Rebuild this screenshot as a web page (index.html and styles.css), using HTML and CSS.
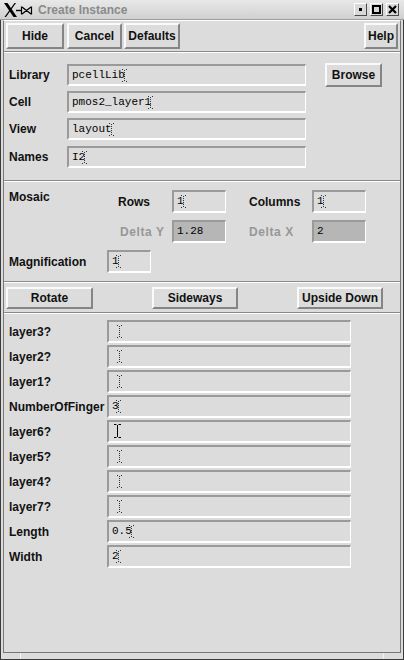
FILE: index.html
```html
<!DOCTYPE html>
<html>
<head>
<meta charset="utf-8">
<title>Create Instance</title>
<link rel="stylesheet" href="styles.css">
</head>
<body>
<div class="window">
  <div class="titlebar">
    <svg class="wm-logo" width="34" height="20" viewBox="0 0 34 20">
      <polygon points="3,3 6.5,3 16,17 12.5,17" fill="#000"/>
      <polygon points="13.5,3 15,3 5,17 3.5,17" fill="#000"/>
      <path d="M15 10.5h5" stroke="#000" stroke-width="1.4"/>
      <path d="M20.5 6.5v8M30.5 6.5v8M21 7L30 14M30 7L21 14" stroke="#000" stroke-width="1.2" fill="none"/>
    </svg>
    <span class="title">Create Instance</span>
    <div class="wm-buttons">
      <span class="wm-btn"><svg width="5" height="5" viewBox="0 0 5 5"><rect x="1" y="1" width="3" height="3" fill="#000"/></svg></span>
      <span class="wm-btn"><svg width="9" height="9" viewBox="0 0 9 9"><rect x="1" y="1" width="7" height="7" fill="none" stroke="#000" stroke-width="2"/></svg></span>
      <span class="wm-btn"><svg width="9" height="9" viewBox="0 0 9 9"><path d="M1 1L8 8M8 1L1 8" stroke="#000" stroke-width="2.2"/></svg></span>
    </div>
  </div>
  <div class="frame">
    <div class="client">
      <div class="toolbar">
        <button class="btn tb-hide">Hide</button>
        <button class="btn tb-cancel">Cancel</button>
        <button class="btn tb-defaults">Defaults</button>
        <button class="btn tb-help">Help</button>
      </div>
      <div class="sep"></div>

      <div class="identity">
        <div class="row">
          <span class="lbl lbl-id">Library</span>
          <div class="field field-name"><span class="val">pcellLib</span><svg class="caret" width="5" height="13" viewBox="0 0 5 13"><path d="M0 0h1v1H0zM4 0h1v1H4zM2 1h1v1H2zM2 3h1v1H2zM2 5h1v1H2zM2 7h1v1H2zM2 9h1v1H2zM2 11h1v1H2zM0 12h1v1H0zM4 12h1v1H4z" fill="#333"/></svg></div>
          <button class="btn btn-browse">Browse</button>
        </div>
        <div class="row">
          <span class="lbl lbl-id">Cell</span>
          <div class="field field-name"><span class="val">pmos2_layer1</span><svg class="caret" width="5" height="13" viewBox="0 0 5 13"><path d="M0 0h1v1H0zM4 0h1v1H4zM2 1h1v1H2zM2 3h1v1H2zM2 5h1v1H2zM2 7h1v1H2zM2 9h1v1H2zM2 11h1v1H2zM0 12h1v1H0zM4 12h1v1H4z" fill="#333"/></svg></div>
        </div>
        <div class="row">
          <span class="lbl lbl-id">View</span>
          <div class="field field-name"><span class="val">layout</span><svg class="caret" width="5" height="13" viewBox="0 0 5 13"><path d="M0 0h1v1H0zM4 0h1v1H4zM2 1h1v1H2zM2 3h1v1H2zM2 5h1v1H2zM2 7h1v1H2zM2 9h1v1H2zM2 11h1v1H2zM0 12h1v1H0zM4 12h1v1H4z" fill="#333"/></svg></div>
        </div>
        <div class="row row-names">
          <span class="lbl lbl-id">Names</span>
          <div class="field field-name"><span class="val">I2</span><svg class="caret" width="5" height="13" viewBox="0 0 5 13"><path d="M0 0h1v1H0zM4 0h1v1H4zM2 1h1v1H2zM2 3h1v1H2zM2 5h1v1H2zM2 7h1v1H2zM2 9h1v1H2zM2 11h1v1H2zM0 12h1v1H0zM4 12h1v1H4z" fill="#333"/></svg></div>
        </div>
      </div>
      <div class="sep"></div>

      <div class="mosaic">
        <span class="lbl lbl-mosaic">Mosaic</span>
        <span class="lbl">Rows</span>
        <div class="field field-small"><span class="val">1</span><svg class="caret" width="5" height="13" viewBox="0 0 5 13"><path d="M0 0h1v1H0zM4 0h1v1H4zM2 1h1v1H2zM2 3h1v1H2zM2 5h1v1H2zM2 7h1v1H2zM2 9h1v1H2zM2 11h1v1H2zM0 12h1v1H0zM4 12h1v1H4z" fill="#333"/></svg></div>
        <span></span>
        <span class="lbl">Columns</span>
        <div class="field field-small"><span class="val">1</span><svg class="caret" width="5" height="13" viewBox="0 0 5 13"><path d="M0 0h1v1H0zM4 0h1v1H4zM2 1h1v1H2zM2 3h1v1H2zM2 5h1v1H2zM2 7h1v1H2zM2 9h1v1H2zM2 11h1v1H2zM0 12h1v1H0zM4 12h1v1H4z" fill="#333"/></svg></div>

        <span></span>
        <span class="lbl lbl-disabled lbl-dy">Delta Y</span>
        <div class="field field-small field-disabled"><span class="val">1.28</span></div>
        <span></span>
        <span class="lbl lbl-disabled">Delta X</span>
        <div class="field field-small field-disabled"><span class="val">2</span></div>

        <div class="mag-row">
          <span class="lbl lbl-param">Magnification</span>
          <div class="field field-mag"><span class="val">1</span><svg class="caret" width="5" height="13" viewBox="0 0 5 13"><path d="M0 0h1v1H0zM4 0h1v1H4zM2 1h1v1H2zM2 3h1v1H2zM2 5h1v1H2zM2 7h1v1H2zM2 9h1v1H2zM2 11h1v1H2zM0 12h1v1H0zM4 12h1v1H4z" fill="#333"/></svg></div>
        </div>
      </div>
      <div class="sep"></div>

      <div class="actions">
        <button class="btn act-btn act-rotate">Rotate</button>
        <button class="btn act-btn">Sideways</button>
        <button class="btn act-btn">Upside Down</button>
      </div>
      <div class="sep"></div>

      <div class="params">
        <div class="prow"><span class="lbl lbl-param">layer3?</span><div class="field field-param"><svg class="caret caret-empty" width="5" height="13" viewBox="0 0 5 13"><path d="M0 0h1v1H0zM4 0h1v1H4zM2 1h1v1H2zM2 3h1v1H2zM2 5h1v1H2zM2 7h1v1H2zM2 9h1v1H2zM2 11h1v1H2zM0 12h1v1H0zM4 12h1v1H4z" fill="#333"/></svg></div></div>
        <div class="prow"><span class="lbl lbl-param">layer2?</span><div class="field field-param"><svg class="caret caret-empty" width="5" height="13" viewBox="0 0 5 13"><path d="M0 0h1v1H0zM4 0h1v1H4zM2 1h1v1H2zM2 3h1v1H2zM2 5h1v1H2zM2 7h1v1H2zM2 9h1v1H2zM2 11h1v1H2zM0 12h1v1H0zM4 12h1v1H4z" fill="#333"/></svg></div></div>
        <div class="prow"><span class="lbl lbl-param">layer1?</span><div class="field field-param"><svg class="caret caret-empty" width="5" height="13" viewBox="0 0 5 13"><path d="M0 0h1v1H0zM4 0h1v1H4zM2 1h1v1H2zM2 3h1v1H2zM2 5h1v1H2zM2 7h1v1H2zM2 9h1v1H2zM2 11h1v1H2zM0 12h1v1H0zM4 12h1v1H4z" fill="#333"/></svg></div></div>
        <div class="prow"><span class="lbl lbl-param">NumberOfFinger</span><div class="field field-param"><span class="val">3</span><svg class="caret" width="5" height="13" viewBox="0 0 5 13"><path d="M0 0h1v1H0zM4 0h1v1H4zM2 1h1v1H2zM2 3h1v1H2zM2 5h1v1H2zM2 7h1v1H2zM2 9h1v1H2zM2 11h1v1H2zM0 12h1v1H0zM4 12h1v1H4z" fill="#333"/></svg></div></div>
        <div class="prow"><span class="lbl lbl-param">layer6?</span><div class="field field-param"><svg class="ibeam" width="7" height="14" viewBox="0 0 7 14"><path d="M0 0.5h2.5M4.5 0.5H7M3.5 1v12M0 13.5h2.5M4.5 13.5H7" stroke="#000" fill="none"/></svg></div></div>
        <div class="prow"><span class="lbl lbl-param">layer5?</span><div class="field field-param"><svg class="caret caret-empty" width="5" height="13" viewBox="0 0 5 13"><path d="M0 0h1v1H0zM4 0h1v1H4zM2 1h1v1H2zM2 3h1v1H2zM2 5h1v1H2zM2 7h1v1H2zM2 9h1v1H2zM2 11h1v1H2zM0 12h1v1H0zM4 12h1v1H4z" fill="#333"/></svg></div></div>
        <div class="prow"><span class="lbl lbl-param">layer4?</span><div class="field field-param"><svg class="caret caret-empty" width="5" height="13" viewBox="0 0 5 13"><path d="M0 0h1v1H0zM4 0h1v1H4zM2 1h1v1H2zM2 3h1v1H2zM2 5h1v1H2zM2 7h1v1H2zM2 9h1v1H2zM2 11h1v1H2zM0 12h1v1H0zM4 12h1v1H4z" fill="#333"/></svg></div></div>
        <div class="prow"><span class="lbl lbl-param">layer7?</span><div class="field field-param"><svg class="caret caret-empty" width="5" height="13" viewBox="0 0 5 13"><path d="M0 0h1v1H0zM4 0h1v1H4zM2 1h1v1H2zM2 3h1v1H2zM2 5h1v1H2zM2 7h1v1H2zM2 9h1v1H2zM2 11h1v1H2zM0 12h1v1H0zM4 12h1v1H4z" fill="#333"/></svg></div></div>
        <div class="prow"><span class="lbl lbl-param">Length</span><div class="field field-param"><span class="val">0.5</span><svg class="caret" width="5" height="13" viewBox="0 0 5 13"><path d="M0 0h1v1H0zM4 0h1v1H4zM2 1h1v1H2zM2 3h1v1H2zM2 5h1v1H2zM2 7h1v1H2zM2 9h1v1H2zM2 11h1v1H2zM0 12h1v1H0zM4 12h1v1H4z" fill="#333"/></svg></div></div>
        <div class="prow"><span class="lbl lbl-param">Width</span><div class="field field-param"><span class="val">2</span><svg class="caret" width="5" height="13" viewBox="0 0 5 13"><path d="M0 0h1v1H0zM4 0h1v1H4zM2 1h1v1H2zM2 3h1v1H2zM2 5h1v1H2zM2 7h1v1H2zM2 9h1v1H2zM2 11h1v1H2zM0 12h1v1H0zM4 12h1v1H4z" fill="#333"/></svg></div></div>
      </div>
    </div>
    <div class="bottom-frame">
      <span class="bf-left"></span>
      <span class="bf-mid"></span>
      <span class="bf-right"></span>
    </div>
  </div>
</div>
</body>
</html>
```

FILE: styles.css
```css
* { box-sizing: border-box; }

body {
  margin: 0;
  background: #dcdcdc;
  font: bold 12px "Liberation Sans", Arial, sans-serif;
  color: #111;
}

.window {
  width: 404px;
  height: 660px;
  display: flex;
  flex-direction: column;
  background: #dcdcdc;
}

/* ---------- title bar ---------- */
.titlebar {
  height: 20px;
  flex: none;
  display: flex;
  align-items: center;
  padding: 0 5px 0 1px;
  background: linear-gradient(#e8e8e8, #d0d0d0);
  border-bottom: 1px solid #9c9c9c;
}
.wm-logo { display: block; flex: none; }
.title {
  margin-left: 3px;
  color: #8a8a8a;
  font-size: 12px;
  font-weight: bold;
}
.wm-buttons {
  margin-left: auto;
  display: flex;
  gap: 3px;
}
.wm-btn {
  width: 13px;
  height: 13px;
  display: flex;
  align-items: center;
  justify-content: center;
  background: #d8d8d8;
  border: 1px solid;
  border-color: #fff #4a4a4a #4a4a4a #fff;
}
.wm-btn svg { display: block; }

/* ---------- frame ---------- */
.frame {
  flex: 1;
  display: flex;
  flex-direction: column;
  border: 1px solid #3a3a3a;
  border-top: 0;
  padding: 0 2px;
}
.client {
  flex: 1;
  display: flex;
  flex-direction: column;
  border: 1px solid;
  border-color: #fff #767676 #767676 #767676;
}
.bottom-frame {
  height: 6px;
  flex: none;
  display: flex;
  margin: 0 -2px;
}
.bf-left { width: 20px; border-right: 1px solid #f4f4f4; }
.bf-mid { flex: 1; }
.bf-right { width: 20px; border-left: 1px solid #f4f4f4; }

/* ---------- buttons ---------- */
.btn {
  font: bold 12px "Liberation Sans", Arial, sans-serif;
  color: #111;
  background: #dcdcdc;
  border: 2px solid;
  border-color: #fafafa #858585 #858585 #fafafa;
  padding: 0;
  margin: 0;
  height: 26px;
  display: flex;
  align-items: center;
  justify-content: center;
  flex: none;
}

.toolbar {
  flex: none;
  display: flex;
  padding: 2px;
}
.tb-hide { width: 58px; }
.tb-cancel { width: 55px; margin-left: 3px; }
.tb-defaults { width: 56px; margin-left: 2px; }
.tb-help { width: 34px; margin-left: auto; }

.sep {
  flex: none;
  height: 2px;
  border-top: 1px solid #8a8a8a;
  border-bottom: 1px solid #fff;
}

/* ---------- fields ---------- */
.field {
  position: relative;
  display: flex;
  align-items: center;
  flex: none;
  background: #dcdcdc;
  border-style: solid;
  border-width: 2px 1px 2px 2px;
  border-color: #9a9a9a #fff #fff #9a9a9a;
  padding-left: 3px;
  font: normal 11px "Liberation Mono", "DejaVu Sans Mono", monospace;
  color: #000;
  line-height: 13px;
}
.val { white-space: pre; }
.caret { display: block; flex: none; margin-left: -3px; }
.caret-empty { margin-left: 5px; }
.ibeam { position: absolute; left: 5px; top: 2px; display: block; }

.field-disabled { background: #b6b6b6; }

/* ---------- labels ---------- */
.lbl {
  white-space: nowrap;
  color: #111;
  font-weight: bold;
}
.lbl-disabled {
  color: #979797;
  letter-spacing: 0.6px;
}

/* ---------- identity section ---------- */
.identity {
  flex: none;
  display: flex;
  flex-direction: column;
  gap: 5px;
  padding: 11px 0 12px 5px;
}
.row {
  display: flex;
  align-items: center;
  height: 22px;
}
.row-names { margin-top: 1px; }
.lbl-id { width: 58px; flex: none; }
.field-name { width: 239px; height: 22px; }
.btn-browse { width: 57px; height: 24px; margin-left: 19px; }

/* ---------- mosaic section ---------- */
.mosaic {
  flex: none;
  display: grid;
  grid-template-columns: 109px 54px 54px 23px 63px 54px;
  grid-auto-rows: 23px;
  row-gap: 7px;
  align-items: center;
  padding: 8px 0 8px 5px;
}
.lbl-mosaic { align-self: start; }
.lbl-dy { padding-left: 2px; }
.field-small { width: 54px; height: 23px; }
.mag-row {
  grid-column: 1 / -1;
  display: flex;
  align-items: center;
  height: 23px;
}
.field-mag { width: 44px; height: 23px; }

/* ---------- actions ---------- */
.actions {
  flex: none;
  display: flex;
  justify-content: space-between;
  padding: 4px 17px 3px 2px;
}
.act-btn { width: 86px; height: 22px; }
.act-rotate { width: 87px; }

/* ---------- parameters ---------- */
.params {
  flex: none;
  display: flex;
  flex-direction: column;
  gap: 2px;
  padding: 6px 0 0 5px;
}
.prow {
  display: flex;
  align-items: center;
  height: 23px;
}
.lbl-param {
  width: 98px;
  flex: none;
  overflow: hidden;
}
.field-param { width: 244px; height: 23px; }
```
